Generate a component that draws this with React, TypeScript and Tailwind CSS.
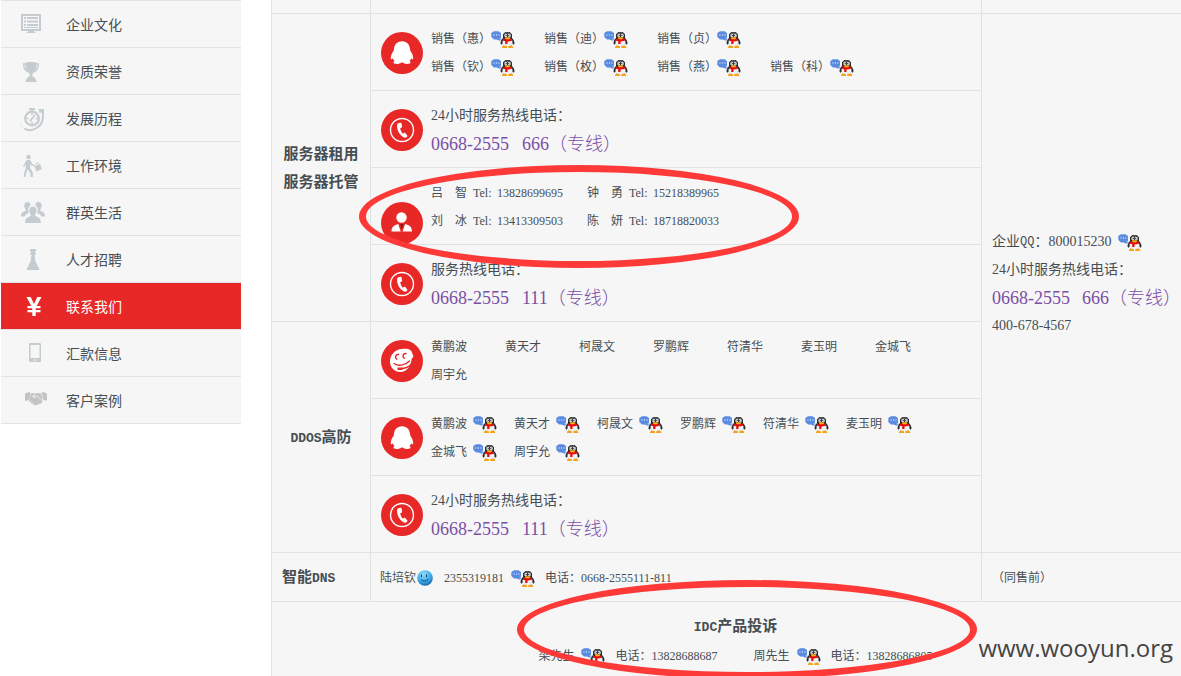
import React from "react";

const SONG = "font-['Liberation_Serif','Noto_Sans_CJK_SC',sans-serif]";

/* ---------- sidebar icons ---------- */

function Glyph({ children }: { children: React.ReactNode }) {
  return (
    <svg viewBox="0 0 28 28" className="h-7 w-7 shrink-0" fill="currentColor" aria-hidden="true">
      {children}
    </svg>
  );
}

const icons = {
  monitor: (
    <Glyph>
      <path fillRule="evenodd" d="M2 4h20v17h-20zM4 6v13h16v-13z" />
      <path d="M5 7h2v2H5zM8 7h11v2H8zM5 10.500h2v2H5zM8 10.500h11v2H8zM5 14h2v2H5zM8 14h11v2H8zM5 17h14v1H5zM9 21h6v1h1.500v1h-9v-1H9z" />
    </Glyph>
  ),
  trophy: (
    <Glyph>
      <path d="M6.500 6C6.500 4.800 17.500 4.800 17.500 6c.2 5.300-1 9-4 10.500v3.200c1.600.3 2.600 1 2.700 2.300.8.300 1.200 1 1.200 3H6.600c0-2 .4-2.700 1.200-3 .1-1.300 1-2 2.700-2.300v-3.200C7.500 15 6.300 11.300 6.500 6z" />
      <path d="M7.500 7H4.700c0 4 2 7 5 7.800M16.500 7h2.800c0 4-2 7-5 7.800" fill="none" stroke="currentColor" strokeWidth="1.500" />
    </Glyph>
  ),
  stopwatch: (
    <Glyph>
      <g fill="none" stroke="currentColor">
        <circle cx="13" cy="14.500" r="6.800" strokeWidth="2.200" />
        <path d="M13 9v2M13 18v2M7.500 14.500h2M16.500 14.500h2" strokeWidth="1.500" />
        <path d="M16 11l-3 3.500-2 3" strokeWidth="1.800" />
        <path d="M1 19.500C2.500 22.500 4 24 6 25" strokeWidth="0.800" opacity="0.600" />
        <path d="M5.500 24.500C9.500 27 14 26.500 17.500 24c5-3 7.300-8 6.200-15" strokeWidth="2" />
      </g>
      <path d="M10 4h6v2h-2v2h-2V6h-2zM19.500 5h5.500v6l-2-2.500-2.500.5z" />
    </Glyph>
  ),
  walker: (
    <Glyph>
      <circle cx="9.500" cy="6" r="2.200" />
      <path d="M7.500 9h3.600l2.200 4 3.500 1.600-.6 1.200-4.200-1.600-.8-1.300v4.300l2.600 4V26h-2.400v-4l-3-4-1 4.300L6 26H4.500l.7-4 1.600-5v-4l-1.600 3L4 15.200z" />
      <path d="M15.500 15.500l5.500-2.500L23 18l-5.500 2.500z" />
      <path d="M17.500 14l-.3-1.300 2-.9.900 1" fill="none" stroke="currentColor" />
    </Glyph>
  ),
  group: (
    <Glyph>
      <path d="M8.500 4c2.200 0 3.200 1.600 3 3.600-2.200 1.300-2.700 3.500-2 5.900l.4 1.200c-1.600 1-3.700 1.600-4.200 3.800H2c0-4 1.600-4.500 4.800-5.700v-1.200C4.500 9.300 4.700 4 8.500 4zM19.500 4c-2.200 0-3.200 1.600-3 3.600 2.200 1.300 2.700 3.500 2 5.900l-.4 1.200c1.600 1 3.700 1.600 4.200 3.800H26c0-4-1.600-4.500-4.800-5.700v-1.200C23.500 9.300 23.300 4 19.500 4z" />
      <path d="M14 8.500c4.200 0 4.400 5 2.200 8v1.600c3.300 1.300 5.500 1.900 5.800 6.900H6c.3-5 2.500-5.600 5.800-6.900v-1.600c-2.200-3-2-8 2.200-8z" />
    </Glyph>
  ),
  chess: (
    <Glyph>
      <path d="M11 4h6v2.500h-1V8h1v1.500h-1.500L16.300 16c.6 2 1.700 2.900 2.200 4.500H9.500c.5-1.600 1.600-2.500 2.200-4.500l.8-6.500H11V8h1V6.500h-1zM8 22h12v3H8z" />
      <path d="M9.500 20h9v2h-9z" />
    </Glyph>
  ),
  yen: (
    <Glyph>
      <path d="M7.500 5h4.200L15 12l3.300-7h4.200l-4.800 9H21.500v2.200h-4.800V18h4.800v2.200h-4.800V24h-3.400v-3.800H8.500V18h4.800v-1.800H8.500V14h3.800z" />
    </Glyph>
  ),
  phone: (
    <Glyph>
      <path fillRule="evenodd" d="M11.500 4h9C21.500 4 22 4.500 22 5.500v16c0 1-.5 1.500-1.500 1.500h-9c-1 0-1.500-.5-1.500-1.500v-16C10 4.500 10.500 4 11.500 4zM11.500 6v13h9V6zM14.500 20.500v1h3v-1z" />
    </Glyph>
  ),
  handshake: (
    <Glyph>
      <g fill="#c4c4c4">
        <path d="M6 7.500l4-1.500 1.800.8-1.600 6.700L7.500 15 6 14.300zM28 7.500L24.300 6l-1.800.8 1.700 6.700 2.300 1.300 1.500-.5z" />
        <path d="M12.300 7.300l4-.3-3.100 3.500c1 1.800 2.800 1.300 4.500-.3l6 5c.5 1-.5 1.800-1.500 1.200.3 1-.8 1.700-1.700 1.100 0 .9-1 1.400-1.900.8-.1.900-1.100 1.200-2 .6l-2.200-1.600-2.800-2.300-1.500-1.500z" />
        <path d="M17 7l5 .3 1.600 5.900-.6 1-5.300-4.700c-1.300 1-2.300 1.500-3.300 1z" />
        <path d="M9.500 15.200l1.400-1.200 1.300 1-1.400 1.300zM11.700 16.800l1.200-1.100 1.400 1-1.300 1.300zM13.800 18.300l1.200-1 1.300 1-1.200 1.100z" />
      </g>
    </Glyph>
  ),
};

const menu: { label: string; icon: React.ReactNode; active?: boolean }[] = [
  { label: "企业文化", icon: icons.monitor },
  { label: "资质荣誉", icon: icons.trophy },
  { label: "发展历程", icon: icons.stopwatch },
  { label: "工作环境", icon: icons.walker },
  { label: "群英生活", icon: icons.group },
  { label: "人才招聘", icon: icons.chess },
  { label: "联系我们", icon: icons.yen, active: true },
  { label: "汇款信息", icon: icons.phone },
  { label: "客户案例", icon: icons.handshake },
];

function Sidebar() {
  return (
    <nav className="w-60 shrink-0 self-start border-b border-[#dfe3e6] bg-[#f6f6f6] font-['Noto_Sans_CJK_SC',sans-serif] text-sm">
      <ul>
        {menu.map((m) => (
          <li key={m.label} className="border-t border-[#dfe3e6]">
            <a
              href="#"
              aria-current={m.active ? "page" : undefined}
              className={
                m.active
                  ? "flex h-[46px] items-center gap-[19px] bg-[#e72826] pl-[18px] text-white"
                  : "flex h-[46px] items-center gap-[19px] pl-[18px] text-[#c5ccd0]"
              }
            >
              {m.icon}
              <span className={m.active ? "text-white" : "text-[#464e53]"}>{m.label}</span>
            </a>
          </li>
        ))}
      </ul>
    </nav>
  );
}

/* ---------- contact icons ---------- */

function QQ() {
  return (
    <a href="#" aria-label="QQ" className="shrink-0">
      <svg viewBox="0 0 24 17" className="h-[17px] w-6" aria-hidden="true">
        <path d="M3 .3h4.500L10 2v4.500L8.500 7.800 9.500 10 5.500 8.500H3L.3 6V2z" fill="#5b8be0" />
        <path d="M2.500 3.500h1v1h-1zM5 3.500h1v1H5zM7.500 3.500h1v1h-1z" fill="#fff" />
        <path d="M9 7.500h1.300v1.300H9z" fill="#5b8be0" />
        <path d="M14.300 1h4.400l2.300 2.300V7c1.600 1.500 2.500 3.300 2.500 5.500l-1 1.200-1.500-1.200v2.500h-9v-2.500l-1.500 1.200-1-1.200C9.500 10.300 10.400 8.500 12 7V3.300z" fill="#2b2d30" />
        <path d="M14.500 1.500h4l1 1.300h-6z" fill="#66696d" />
        <path d="M12 9h9c.9 2.800.6 5-1 6.800h-7c-1.600-1.800-1.900-4-1-6.800z" fill="#eef1f4" />
        <path d="M13.500 3.200h2.600v2.600h-2.600zM17 3.200h2.600v2.600H17z" fill="#fff" />
        <path d="M14.700 3.900h1v1.200h-1zM17.300 3.900h1v1.200h-1z" fill="#111" />
        <path d="M12 7.800h9v1.900c-1.600.6-3 .8-4.500.8v2.500h-2.300V10.300L12 9.700z" fill="#e5100d" />
        <path d="M14 6.200h5.200v1.200l-1.300.9h-2.600L14 7.400z" fill="#f8b01d" />
        <path d="M11 15.800l1.300-1h3l.7 1V17h-5zM17.200 15.800l.7-1h3l1.300 1V17h-5z" fill="#f7a116" />
      </svg>
    </a>
  );
}

function Smile() {
  return (
    <svg viewBox="0 0 16 16" className="mx-px h-4 w-4 shrink-0" aria-hidden="true">
      <defs>
        <radialGradient id="ball" cx="0.4" cy="0.250" r="0.850">
          <stop offset="0" stopColor="#8ddcf8" />
          <stop offset="0.600" stopColor="#3aa6e6" />
          <stop offset="1" stopColor="#0f4c8e" />
        </radialGradient>
      </defs>
      <circle cx="8" cy="8" r="7.800" fill="url(#ball)" />
      <path d="M4.500 4.500v2.500M9.500 4.500v2.500M4 9.500c2 2.300 5 2 7.500-.5" fill="none" stroke="#123f73" strokeWidth="1" />
    </svg>
  );
}

function Disc({ children, end }: { children: React.ReactNode; end?: boolean }) {
  return (
    <svg viewBox="0 0 42 42" className={end ? "h-[42px] w-[42px] shrink-0 self-end" : "h-[42px] w-[42px] shrink-0"} aria-hidden="true">
      <circle cx="21" cy="21" r="21" fill="#e72826" />
      {children}
    </svg>
  );
}

const penguinDisc = (
  <Disc>
    <path d="M21 9.200c5.200 0 8 3.500 8.200 9.300 1.800 2.500 3.300 5.500 3 8.500-.7.700-1.500 0-2-.8-.3 1.200-.8 2-1.700 2.900.8.600 1.200 1.300.9 2-1.500 1.400-6 1.100-7.700-.6h-1.400c-1.700 1.700-6.200 2-7.700.6-.3-.7.100-1.400.9-2-.9-.9-1.400-1.700-1.700-2.900-.5.800-1.300 1.500-2 .8-.3-3 1.200-6 3-8.500.2-5.800 3-9.300 8.200-9.300z" fill="#fff" />
  </Disc>
);

const phoneDisc = (
  <Disc>
    <circle cx="21" cy="21" r="11.500" fill="none" stroke="#fff" strokeWidth="1.400" />
    <path d="M17.300 14.200l2.200-.4c.7 0 1 .4 1.100 1l.5 2.700c.1.700-.2 1.100-.8 1.300l-1.100.4c.3 2.200 1.300 4 2.700 5.500l1-.7c.6-.4 1.100-.3 1.500.2l1.700 2.100c.4.500.3 1.100-.1 1.500-1 .9-2.200 1.200-3.500.4-4-2.500-6.600-7-6.400-11.800.1-1.200.3-1.900 1.200-2.200z" fill="#fff" />
  </Disc>
);

const personDisc = (
  <Disc end>
    <circle cx="20.500" cy="15.500" r="5.200" fill="#fff" />
    <path d="M10.500 29.500c0-4.500 2-6 6.800-7.500l2.400 7.500zM31 29.500c0-4.500-2-6-6.800-7.500l-2.700 7.500z" fill="#fff" />
    <path d="M19.300 22h2.800l-.8 2 .3 2h-1.800l.3-2z" fill="#5e1513" />
  </Disc>
);

const faceDisc = (
  <Disc>
    <path d="M21 9c3-.5 6.500-.3 8.500 1.300 1.700 1.200 1.500 3.200 2.500 4.700.8 1.500 0 2.700-1.300 3.500-.8 8-5 13.500-11.200 13.500C13.500 32 9 27.500 9 21.500 9 15 14 9.300 21 9z" fill="#fff" />
    <path d="M17.500 14.500c-3-.3-4 3.300-1.700 4.700M25 13.500c-3-.3-4 3.300-1.700 4.700" fill="none" stroke="#e72826" strokeWidth="1.500" strokeLinecap="round" />
    <path d="M13 23.500c4 2.800 11 2.300 15.500-2.500" fill="none" stroke="#e72826" strokeWidth="1.300" strokeLinecap="round" />
    <path d="M20 28.500c4 0 7-1 10-4" fill="none" stroke="#e72826" strokeWidth="1.500" />
    <path d="M16.500 27.500h5v2.500h-5z" fill="#e72826" />
  </Disc>
);

/* ---------- table ---------- */

function IconRow({ icon, children }: { icon: React.ReactNode; children: React.ReactNode }) {
  return (
    <td className="border-t border-l border-[#dfe3e6] p-0">
      <div className="flex h-19 items-center gap-2 pt-0.5 pl-2.5">
        {icon}
        <div className="text-xs leading-7">{children}</div>
      </div>
    </td>
  );
}

function PhoneNumber({ tail }: { tail: string }) {
  return (
    <div className="flex text-lg leading-7 font-light whitespace-nowrap text-[#7b4fa6]">
      <span className="w-[91px]">0668-2555 </span>
      <span>{tail}（专线）</span>
    </div>
  );
}

function Hotline({ label, tail }: { label: string; tail: string }) {
  return (
    <>
      <div className="text-sm leading-7">{label}</div>
      <PhoneNumber tail={tail} />
    </>
  );
}

const sales = ["惠", "迪", "贞", "", "钦", "枚", "燕", "科"];
const names = ["黄鹏波", "黄天才", "柯晟文", "罗鹏辉", "符清华", "麦玉明", "金城飞", "周宇允"];
const managers = [
  ["吕", "智", "13828699695"],
  ["钟", "勇", "15218389965"],
  ["刘", "冰", "13413309503"],
  ["陈", "妍", "18718820033"],
];

const head = "border-t border-l border-[#dfe3e6] p-0 text-center text-[15px] leading-7 font-bold";
const latin = "font-['Liberation_Mono',monospace] text-[13px]";

function Complaint({ name, phone }: { name: string; phone: string }) {
  return (
    <div className="flex items-center">
      <span className="mr-[7px]">{name}</span>
      <QQ />
      <span className="ml-2.5">电话：{phone}</span>
    </div>
  );
}

function Contacts() {
  return (
    <table className={`w-full table-fixed border-separate border-spacing-0 bg-[#f6f6f6] text-[#464e53] ${SONG}`}>
      <colgroup>
        <col className="w-[99px]" />
        <col className="w-[611px]" />
        <col />
      </colgroup>
      <tbody>
        <tr>
          <td className="h-[13px] border-l border-[#dfe3e6] p-0" />
          <td className="border-l border-[#dfe3e6] p-0" />
          <td className="border-l border-[#dfe3e6] p-0" />
        </tr>
        <tr>
          <th rowSpan={4} className={head}>
            服务器租用
            <br />
            服务器托管
          </th>
          <IconRow icon={penguinDisc}>
            <ul className="grid grid-cols-[repeat(4,113px)]">
              {sales.map((s, i) => (
                <li key={i} className="flex h-7 items-center">
                  {s && (
                    <>
                      <span>销售（{s}）</span>
                      <QQ />
                    </>
                  )}
                </li>
              ))}
            </ul>
          </IconRow>
          <td rowSpan={7} className="border-t border-l border-[#dfe3e6] p-0 pt-0.5 pl-2.5 text-sm leading-7 whitespace-nowrap">
            <div className="flex items-center gap-[7px]">
              <span className="flex">
                企业<span className="font-['Liberation_Mono',monospace] text-xs leading-7">QQ</span>：800015230
              </span>
              <QQ />
            </div>
            <Hotline label="24小时服务热线电话：" tail="666" />
            <div>400-678-4567</div>
          </td>
        </tr>
        <tr>
          <IconRow icon={phoneDisc}>
            <Hotline label="24小时服务热线电话：" tail="666" />
          </IconRow>
        </tr>
        <tr>
          <IconRow icon={personDisc}>
            <ul className="grid grid-cols-[repeat(2,156px)]">
              {managers.map(([a, b, tel]) => (
                <li key={tel} className="flex">
                  <span className="flex w-[42px] gap-3">
                    <span>{a}</span>
                    <span>{b}</span>
                  </span>
                  <span className="w-6">Tel:</span>
                  <span>{tel}</span>
                </li>
              ))}
            </ul>
          </IconRow>
        </tr>
        <tr>
          <IconRow icon={phoneDisc}>
            <Hotline label="服务热线电话：" tail="111" />
          </IconRow>
        </tr>
        <tr>
          <th rowSpan={3} className={`${head} pt-0.5`}>
            <span className={latin}>DDOS</span>高防
          </th>
          <IconRow icon={faceDisc}>
            <ul className="grid grid-cols-[repeat(7,74px)]">
              {names.map((n) => (
                <li key={n}>{n}</li>
              ))}
            </ul>
          </IconRow>
        </tr>
        <tr>
          <IconRow icon={penguinDisc}>
            <ul className="grid grid-cols-[repeat(6,83px)]">
              {names.map((n) => (
                <li key={n} className="flex h-7 items-center gap-1.5">
                  <span>{n}</span>
                  <QQ />
                </li>
              ))}
            </ul>
          </IconRow>
        </tr>
        <tr>
          <IconRow icon={phoneDisc}>
            <Hotline label="24小时服务热线电话：" tail="111" />
          </IconRow>
        </tr>
        <tr className="text-xs">
          <th className="h-[49px] border-t border-l border-[#dfe3e6] p-0 pt-0.5 pl-2.5 text-left text-[15px] font-bold">
            智能<span className={latin}>DNS</span>
          </th>
          <td className="border-t border-l border-[#dfe3e6] p-0 pt-0.5 pl-[9px]">
            <div className="flex items-center">
              <span>陆培钦</span>
              <Smile />
              <span className="mr-[7px] ml-2.5">2355319181</span>
              <QQ />
              <span className="ml-2.5">电话：0668-2555111-811</span>
            </div>
          </td>
          <td className="border-t border-l border-[#dfe3e6] p-0 pt-0.5 pl-2.5">（同售前）</td>
        </tr>
        <tr>
          <td colSpan={3} className="border-t border-l border-[#dfe3e6] p-0 pt-2.5 pb-2 pl-[18px]">
            <h2 className="text-center text-[15px] leading-7 font-bold">
              <span className={latin}>IDC</span>产品投诉
            </h2>
            <div className="flex justify-center gap-9 text-xs leading-7">
              <Complaint name="梁先生" phone="13828688687" />
              <Complaint name="周先生" phone="13828686805" />
            </div>
          </td>
        </tr>
      </tbody>
    </table>
  );
}

export default function App() {
  return (
    <div className="relative flex min-h-screen items-start gap-[30px] overflow-hidden bg-white pl-px">
      <Sidebar />
      <main className="min-w-0 flex-1">
        <Contacts />
      </main>
      <div className="pointer-events-none absolute top-[165px] left-[359px] h-[103px] w-[440px] rounded-[50%] border-[7px] border-[#fd3a38]" />
      <div className="pointer-events-none absolute top-[580px] left-[517px] h-[99px] w-[460px] rounded-[50%] border-[7px] border-[#fd3a38]" />
      <p className="absolute right-2 bottom-3 font-['Open_Sans',sans-serif] text-2xl leading-9 text-[#444]">www.wooyun.org</p>
    </div>
  );
}
